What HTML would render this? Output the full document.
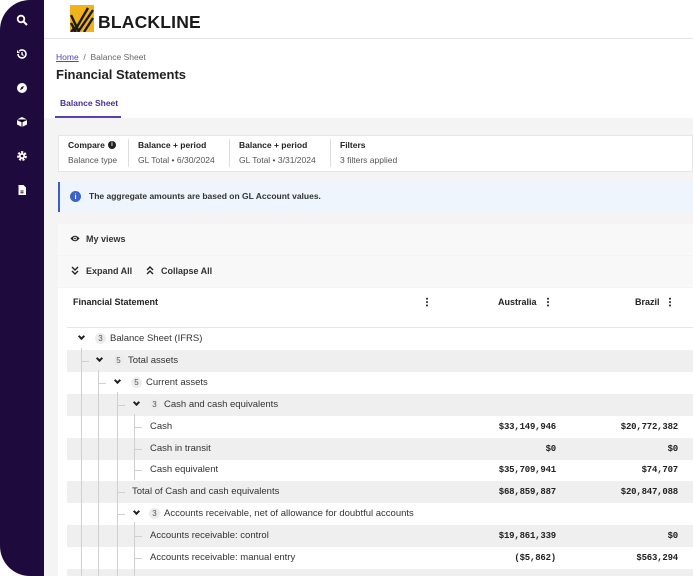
<!DOCTYPE html>
<html style="width:693px;height:576px;overflow:hidden"><head><style>
*{margin:0;padding:0;box-sizing:border-box}
body{width:693px;height:576px;overflow:hidden;background:#fff;font-family:"Liberation Sans",sans-serif;color:#222;position:relative}
.a{position:absolute}
.sb{left:0;top:0;width:44px;height:576px;background:#1f0a3d;border-radius:30px 0 0 30px}
.ic{position:absolute;left:16px;width:12px;height:12px;color:#fff}
.t{position:absolute;font-size:9px;white-space:nowrap}
.row{position:absolute;left:67px;right:0;height:22px}
.g{background:#efefef}
.num{position:absolute;font-family:"Liberation Mono",monospace;font-size:9px;font-weight:bold;color:#222;text-align:right;white-space:nowrap;letter-spacing:-0.2px}
.vl{position:absolute;width:1px;background:#cfcfcf}
.hl{position:absolute;height:1px;width:7px;background:#cfcfcf}
.chev{position:absolute;width:5px;height:5px;border-right:2px solid #222;border-bottom:2px solid #222;transform:rotate(45deg)}
.cnt{position:absolute;font-size:8px;color:#555;background:#ececec;border-radius:6px;width:11px;height:11px;text-align:center;line-height:11px}
.lab{position:absolute;font-size:9.5px;color:#333;white-space:nowrap}
.keb{position:absolute;width:2px;height:10px;background:radial-gradient(circle,#333 0.9px,transparent 1.1px) 0 0/2px 3.4px repeat-y}
</style></head><body>
<div class="a sb"></div>
<svg class="ic" style="top:14px" viewBox="0 0 12 12"><circle cx="5" cy="5" r="3.3" fill="none" stroke="#fff" stroke-width="1.8"/><path d="M7.5 7.5L11 11" stroke="#fff" stroke-width="2"/></svg>
<svg class="ic" style="top:48px" viewBox="0 0 12 12"><path d="M2 6a4 4 0 1 0 1.2-2.9" fill="none" stroke="#fff" stroke-width="1.6"/><path d="M1 2v3h3" fill="#fff"/><path d="M6 4v2.5l1.5 1" stroke="#fff" stroke-width="1.3" fill="none"/></svg>
<svg class="ic" style="top:82px" viewBox="0 0 12 12"><circle cx="6" cy="6" r="5" fill="#fff"/><path d="M4 8l1.3-3L8 4 6.7 7z" fill="#1f0a3d"/></svg>
<svg class="ic" style="top:116px" viewBox="0 0 12 12"><path d="M6 1l5 2.5v5L6 11 1 8.5v-5z" fill="#fff"/><path d="M6 6v5M1 3.5L6 6l5-2.5" stroke="#1f0a3d" stroke-width="1"/></svg>
<svg class="ic" style="top:150px" viewBox="0 0 12 12"><circle cx="6" cy="6" r="3.6" fill="none" stroke="#fff" stroke-width="2.6" stroke-dasharray="2 1.2"/><circle cx="6" cy="6" r="3" fill="#fff"/><circle cx="6" cy="6" r="1.3" fill="#1f0a3d"/></svg>
<svg class="ic" style="top:184px" viewBox="0 0 12 12"><path d="M2.5 1h5l2.5 2.5V11h-7.5z" fill="#fff"/><path d="M4.5 7h3M4.5 8.8h3" stroke="#1f0a3d" stroke-width="1"/></svg>

<!-- header -->
<svg class="a" style="left:70px;top:5px" width="24" height="27" viewBox="0 0 24 27"><rect width="24" height="27" fill="#f2b21c"/><path d="M1 10l8 17M1 18l5 9M8 27L23 5M14 27L23 13M4 27L18 3M1 27l4-5" stroke="#1a1a1a" stroke-width="2.4" fill="none"/></svg>
<div class="t" style="left:98px;top:12px;font-size:17.5px;font-weight:bold;letter-spacing:0.2px;color:#1a1a1a">BLACKLINE</div>
<div class="a" style="left:44px;top:38px;right:0;height:1px;background:#e4e4e4"></div>
<div class="t" style="left:56px;top:52px;font-size:8.5px;color:#666"><span style="color:#5a44b0;text-decoration:underline">Home</span> &nbsp;/&nbsp; Balance Sheet</div>
<div class="t" style="left:56px;top:67px;font-size:13px;font-weight:bold;color:#222">Financial Statements</div>
<div class="t" style="left:60px;top:98px;font-size:8.5px;font-weight:bold;color:#4b2e9a">Balance Sheet</div>
<div class="a" style="left:55px;top:116px;width:66px;height:2px;background:#5b3fb0"></div>
<div class="a" style="left:44px;top:118px;right:0;height:458px;background:#f4f4f4"></div>

<!-- compare card -->
<div class="a" style="left:58px;top:135px;right:0;height:37px;background:#fff;border:1px solid #e6e6e6"></div>
<div class="t" style="left:68px;top:140px;font-size:8.5px;font-weight:bold">Compare</div>
<div class="a" style="left:108px;top:141px;width:8px;height:8px;border-radius:50%;background:#222;color:#fff;font-size:6px;text-align:center;line-height:8px;font-weight:bold">i</div>
<div class="t" style="left:68px;top:155px;font-size:8.5px;color:#555">Balance type</div>
<div class="a" style="left:128px;top:139px;width:1px;height:28px;background:#ddd"></div>
<div class="t" style="left:138px;top:140px;font-size:8.5px;font-weight:bold">Balance + period</div>
<div class="t" style="left:138px;top:155px;font-size:8.5px;color:#555">GL Total • 6/30/2024</div>
<div class="a" style="left:229px;top:139px;width:1px;height:28px;background:#ddd"></div>
<div class="t" style="left:239px;top:140px;font-size:8.5px;font-weight:bold">Balance + period</div>
<div class="t" style="left:239px;top:155px;font-size:8.5px;color:#555">GL Total • 3/31/2024</div>
<div class="a" style="left:330px;top:139px;width:1px;height:28px;background:#ddd"></div>
<div class="t" style="left:340px;top:140px;font-size:8.5px;font-weight:bold">Filters</div>
<div class="t" style="left:340px;top:155px;font-size:8.5px;color:#555">3 filters applied</div>

<!-- banner -->
<div class="a" style="left:58px;top:182px;right:0;height:30px;background:#eef5fc;border-left:2px solid #3b5fc4"></div>
<div class="a" style="left:70px;top:191px;width:11px;height:11px;border-radius:50%;background:#3b63c8;color:#fff;font-size:7.5px;font-weight:bold;text-align:center;line-height:11px">i</div>
<div class="t" style="left:89px;top:191px;font-size:8.5px;font-weight:bold;color:#333">The aggregate amounts are based on GL Account values.</div>

<!-- my views / expand -->
<div class="a" style="left:58px;top:224px;right:0;height:31px;background:#f8f8f8"></div>
<svg class="a" style="left:70px;top:234px" width="10" height="9" viewBox="0 0 10 9"><path d="M0.5 4.5Q5 -1 9.5 4.5Q5 10 0.5 4.5z" fill="#222"/><circle cx="5" cy="4.5" r="1.8" fill="#fff"/><circle cx="5" cy="4.5" r="0.9" fill="#222"/></svg>
<div class="t" style="left:86px;top:234px;font-size:9px;font-weight:bold;color:#333">My views</div>
<div class="a" style="left:58px;top:256px;right:0;height:31px;background:#f8f8f8"></div>
<svg class="a" style="left:71px;top:266px" width="8" height="9" viewBox="0 0 8 9"><path d="M1 1l3 3 3-3M1 5l3 3 3-3" stroke="#222" stroke-width="1.4" fill="none"/></svg>
<div class="t" style="left:86px;top:266px;font-size:9px;font-weight:bold;color:#333">Expand All</div>
<svg class="a" style="left:146px;top:266px" width="8" height="9" viewBox="0 0 8 9"><path d="M1 4l3-3 3 3M1 8l3-3 3 3" stroke="#222" stroke-width="1.4" fill="none"/></svg>
<div class="t" style="left:161px;top:266px;font-size:9px;font-weight:bold;color:#333">Collapse All</div>

<!-- table -->
<div class="a" style="left:58px;top:288px;right:0;height:288px;background:#fff"></div>
<div class="t" style="left:73px;top:297px;font-size:9px;font-weight:bold">Financial Statement</div>
<div class="keb" style="left:426px;top:297px"></div>
<div class="t" style="left:498px;top:297px;font-size:9px;font-weight:bold">Australia</div>
<div class="keb" style="left:547px;top:297px"></div>
<div class="t" style="left:635px;top:297px;font-size:9px;font-weight:bold">Brazil</div>
<div class="keb" style="left:669px;top:297px"></div>
<div class="a" style="left:67px;top:327px;right:0;height:1px;background:#e6e6e6"></div>

<div class="row g" style="top:350px"></div>
<div class="row g" style="top:394px"></div>
<div class="row g" style="top:438px"></div>
<div class="row g" style="top:481px"></div>
<div class="row g" style="top:525px"></div>
<div class="row g" style="top:569px"></div>

<div class="vl" style="left:81px;top:348px;height:228px"></div>
<div class="vl" style="left:98px;top:370px;height:206px"></div>
<div class="vl" style="left:117px;top:392px;height:184px"></div>
<div class="vl" style="left:134px;top:414px;height:66px"></div>
<div class="vl" style="left:134px;top:522px;height:54px"></div>

<div class="hl" style="left:82px;top:361px"></div>
<div class="hl" style="left:99px;top:383px"></div>
<div class="hl" style="left:118px;top:405px"></div>
<div class="hl" style="left:135px;top:427px"></div>
<div class="hl" style="left:135px;top:449px"></div>
<div class="hl" style="left:135px;top:470px"></div>
<div class="hl" style="left:118px;top:492px"></div>
<div class="hl" style="left:118px;top:514px"></div>
<div class="hl" style="left:135px;top:536px"></div>
<div class="hl" style="left:135px;top:558px"></div>

<div class="chev" style="left:79px;top:334px"></div>
<div class="cnt" style="left:95px;top:333px">3</div>
<div class="lab" style="left:110px;top:333px">Balance Sheet (IFRS)</div>

<div class="chev" style="left:97px;top:356px"></div>
<div class="cnt" style="left:113px;top:355px">5</div>
<div class="lab" style="left:128px;top:355px">Total assets</div>

<div class="chev" style="left:115px;top:378px"></div>
<div class="cnt" style="left:131px;top:377px">5</div>
<div class="lab" style="left:146px;top:377px">Current assets</div>

<div class="chev" style="left:134px;top:400px"></div>
<div class="cnt" style="left:149px;top:399px">3</div>
<div class="lab" style="left:164px;top:399px">Cash and cash equivalents</div>

<div class="lab" style="left:150px;top:421px">Cash</div>
<div class="num" style="right:137px;top:422px">$33,149,946</div>
<div class="num" style="right:15px;top:422px">$20,772,382</div>

<div class="lab" style="left:150px;top:443px">Cash in transit</div>
<div class="num" style="right:137px;top:444px">$0</div>
<div class="num" style="right:15px;top:444px">$0</div>

<div class="lab" style="left:150px;top:464px">Cash equivalent</div>
<div class="num" style="right:137px;top:465px">$35,709,941</div>
<div class="num" style="right:15px;top:465px">$74,707</div>

<div class="lab" style="left:132px;top:486px">Total of Cash and cash equivalents</div>
<div class="num" style="right:137px;top:487px">$68,859,887</div>
<div class="num" style="right:15px;top:487px">$20,847,088</div>

<div class="chev" style="left:134px;top:509px"></div>
<div class="cnt" style="left:149px;top:508px">3</div>
<div class="lab" style="left:164px;top:508px">Accounts receivable, net of allowance for doubtful accounts</div>

<div class="lab" style="left:150px;top:530px">Accounts receivable: control</div>
<div class="num" style="right:137px;top:531px">$19,861,339</div>
<div class="num" style="right:15px;top:531px">$0</div>

<div class="lab" style="left:150px;top:552px">Accounts receivable: manual entry</div>
<div class="num" style="right:137px;top:553px">($5,862)</div>
<div class="num" style="right:15px;top:553px">$563,294</div>
</body></html>
